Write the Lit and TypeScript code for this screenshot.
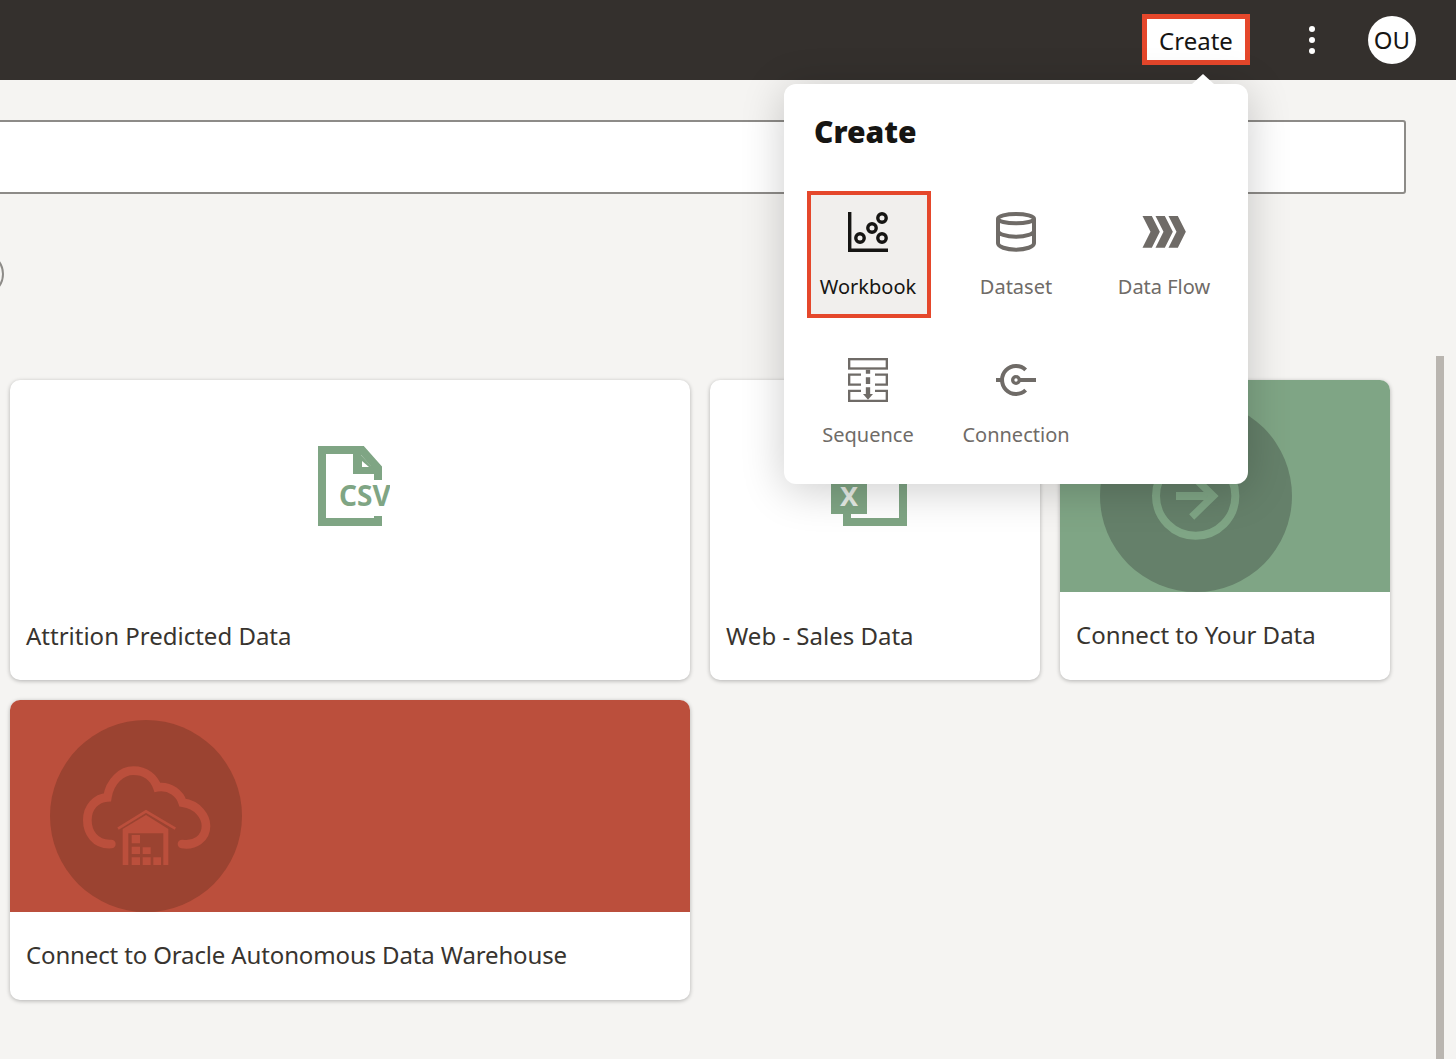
import { LitElement, css, html, svg } from "lit";
import { customElement } from "lit/decorators.js";

const CREATE_ITEMS = [
  {
    label: "Workbook",
    active: true,
    icon: html`<svg width="40" height="40" viewBox="0 0 40 40" fill="none" stroke="#161513">
      <path d="M1.7 0v38.3H40" stroke-width="3.4" />
      <circle cx="12" cy="26" r="4.2" stroke-width="3.4" />
      <circle cx="24" cy="16" r="4.2" stroke-width="3.4" />
      <circle cx="34" cy="6" r="4.2" stroke-width="3.4" />
      <circle cx="34" cy="26" r="4.2" stroke-width="3.4" />
    </svg>`,
  },
  {
    label: "Dataset",
    icon: html`<svg width="40" height="40" viewBox="618 96 120 120" fill="none" stroke="#6f6b67" stroke-width="12">
      <ellipse cx="678" cy="116" rx="54" ry="14" />
      <path d="M624 116v74c0 10 24 19 54 19s54-9 54-19v-74" />
      <path d="M624 152c0 10 24 18 54 18s54-8 54-18" />
    </svg>`,
  },
  {
    label: "Data Flow",
    icon: html`<svg width="44" height="32" viewBox="1057 110 131 96" fill="#6f6b67">
      <path d="M1058 110h28l24 47-24 48h-28l24-48z" />
      <path d="M1097 110h28l24 47-24 48h-28l24-48z" />
      <path d="M1136 110h28l24 47-24 48h-28l24-48z" />
    </svg>`,
  },
  {
    label: "Sequence",
    icon: html`<svg width="40" height="44" viewBox="174 57 120 132" fill="none" stroke="#6f6b67" stroke-width="7">
      <rect x="177.500" y="60.500" width="113" height="28" />
      <path d="M213 107h-35.500v30H213M255 107h35.500v30H255" />
      <path d="M213 155.500h-35.500v30h113v-30H255" />
      <path d="M234 92v12M234 115v20M234 145v24" stroke-width="13" />
      <path d="M219 165h30l-15 17z" fill="#6f6b67" stroke="none" />
    </svg>`,
  },
  {
    label: "Connection",
    icon: html`<svg width="40" height="32" viewBox="618 72 120 96" fill="none" stroke="#6f6b67">
      <path d="M707 89.500a42 42 0 1 0 0 61" stroke-width="12" />
      <circle cx="678" cy="120" r="10" stroke-width="10" />
      <path d="M690 120h48M618 120h18" stroke-width="12" />
    </svg>`,
  },
];

const csvIcon = svg`<svg width="80" height="80" viewBox="0 0 80 80" fill="none">
  <path d="M68 34V22L52 4H12v72h56v-6" stroke="#7fa584" stroke-width="8" />
  <path d="M47 4v20h21" stroke="#7fa584" stroke-width="8" />
  <path d="M45 8h5l14 15v5H45z" fill="#7fa584" />
  <path d="M52 15v6h7z" fill="#fff" />
  <rect x="24" y="38" width="56" height="30" fill="#fff" />
  <text x="29" y="60" class="csv">CSV</text>
</svg>`;

const excelIcon = svg`<svg width="88" height="80" viewBox="0 0 88 80" fill="none">
  <path d="M16 4h56v72H16V62" stroke="#7fa584" stroke-width="8" />
  <rect x="0" y="20" width="36" height="48" fill="#7fa584" />
  <text x="9" y="60" class="xls">X</text>
</svg>`;

const connectIcon = svg`<svg width="192" height="192" viewBox="150 90 576 576" fill="none" stroke="#7fa585">
  <circle cx="437" cy="378" r="119" stroke-width="24" />
  <path d="M378 378h112" stroke-width="24" />
  <path d="M425 315l65 63-65 63" stroke-width="22" />
</svg>`;

const warehouseIcon = svg`<svg width="192" height="192" viewBox="30 30 576 576" fill="none">
  <path d="M214 402c-50 3-72-36-72-72 0-38 26-66 60-68 8-50 44-80 78-80 38 0 62 22 72 50 40-6 68 20 76 46 46 6 70 42 70 70 0 38-34 60-72 54" stroke="#bb4f3c" stroke-width="26" stroke-linecap="round" />
  <path d="M234 356l84-52 88 52" stroke="#bb4f3c" stroke-width="8" />
  <path d="M248 357l70-42 67 42v108h-15v-95H265v95h-17z" fill="#bb4f3c" />
  <path d="M275 375h25v25h-25zM275 410h25v22h-25zM275 442h25v23h-25zM308 412h24v20h-24zM308 442h24v23h-24zM340 442h23v23h-23z" fill="#bb4f3c" />
</svg>`;

@customElement("app-root")
export class AppRoot extends LitElement {
  static styles = css`
    :host {
      display: block;
      position: relative;
      width: 1456px;
      height: 1059px;
      overflow: hidden;
      background: #f5f4f2;
      color: #38342f;
      font-family: "Noto Sans", "Open Sans", sans-serif;
    }

    .topbar {
      height: 80px;
      background: #34302d;
      display: flex;
      align-items: center;
      justify-content: flex-end;
      padding-right: 40px;
      box-sizing: border-box;
    }

    .create-btn {
      width: 108px;
      height: 51px;
      margin-top: -1px;
      padding-top: 2px;
      box-sizing: border-box;
      border: 5px solid #e5472b;
      background: #fff;
      color: #161513;
      font-size: 24px;
      display: flex;
      align-items: center;
      justify-content: center;
    }

    .dots {
      margin-left: 59px;
      display: flex;
      flex-direction: column;
      gap: 5px;
    }

    .dots span {
      width: 6px;
      height: 6px;
      border-radius: 50%;
      background: #fff;
    }

    .avatar {
      margin-left: 53px;
      width: 48px;
      height: 48px;
      padding-bottom: 2px;
      box-sizing: border-box;
      border-radius: 50%;
      background: #fff;
      color: #161513;
      font-size: 24px;
      display: flex;
      align-items: center;
      justify-content: center;
    }

    .search {
      margin: 40px 50px 0 -10px;
      height: 74px;
      box-sizing: border-box;
      background: #fff;
      border: 2px solid #8d8b88;
      border-radius: 3px;
    }

    .chip {
      margin: 58px 0 0 -40px;
      width: 44px;
      height: 44px;
      box-sizing: border-box;
      border: 2px solid #8d8b88;
      border-radius: 50%;
    }

    .tiles {
      margin-top: 84px;
      padding-left: 10px;
      display: grid;
      grid-template-columns: 680px 330px 330px;
      grid-auto-rows: 300px;
      gap: 20px;
    }

    .tile {
      background: #fff;
      border-radius: 10px;
      overflow: hidden;
      box-shadow: 0 1px 4px rgba(0, 0, 0, 0.28);
      display: flex;
      flex-direction: column;
    }

    .tile-art {
      height: 212px;
      flex: none;
      display: flex;
      align-items: center;
      justify-content: center;
    }

    .tile-art svg {
      display: block;
    }

    .tile-art.banner {
      justify-content: flex-start;
      padding-left: 40px;
      align-items: flex-end;
    }

    .tile-art.green {
      background: #7fa585;
    }

    .tile-art.red {
      background: #bb4f3c;
    }

    .disc {
      width: 192px;
      height: 192px;
      border-radius: 50%;
    }

    .green .disc {
      background: #65806a;
    }

    .red .disc {
      background: #9b4331;
    }

    .tile-label {
      flex: 1;
      display: flex;
      align-items: center;
      padding: 0 0 2px 16px;
      font-size: 24px;
    }

    .banner + .tile-label {
      padding-bottom: 4px;
    }

    .tile-label.tight {
      letter-spacing: -0.14px;
    }

    .csv {
      font: 700 28px "Noto Sans", sans-serif;
      fill: #7fa584;
    }

    .xls {
      font: 700 27px "Noto Sans", sans-serif;
      fill: #e6ece6;
    }

    .scrollbar {
      position: absolute;
      left: 1436px;
      top: 356px;
      bottom: 0;
      width: 8px;
      background: #b9b5b0;
    }

    .popover {
      position: absolute;
      left: 784px;
      top: 84px;
      width: 464px;
      height: 400px;
      box-sizing: border-box;
      padding: 28px 0 0 30px;
      background: #fff;
      border-radius: 12px;
      box-shadow: 0 6px 44px rgba(0, 0, 0, 0.2);
    }

    .popover::before {
      content: "";
      position: absolute;
      left: 408px;
      top: -10px;
      border-left: 11px solid transparent;
      border-right: 11px solid transparent;
      border-bottom: 10px solid #fff;
    }

    .popover h2 {
      margin: 0 0 39px;
      font-size: 30px;
      line-height: 40px;
      font-weight: 900;
      color: #161513;
    }

    .create-grid {
      margin-left: -7px;
      display: grid;
      grid-template-columns: repeat(3, 124px);
      grid-auto-rows: 127px;
      gap: 21px 24px;
    }

    .create-item {
      box-sizing: border-box;
      border: 4px solid transparent;
      padding-right: 2px;
      display: flex;
      flex-direction: column;
      align-items: center;
      color: #6f6b67;
      font-size: 20px;
    }

    .create-item.active {
      border-color: #e5472b;
      background: #f1efed;
      color: #161513;
    }

    .create-icon {
      height: 44px;
      margin-top: 15px;
      display: flex;
      align-items: center;
      justify-content: center;
    }

    .create-label {
      margin-top: 19px;
      line-height: 28px;
      white-space: nowrap;
    }
  `;

  render() {
    return html`
      <header class="topbar">
        <div class="create-btn">Create</div>
        <div class="dots"><span></span><span></span><span></span></div>
        <div class="avatar">OU</div>
      </header>

      <div class="search"></div>
      <div class="chip"></div>

      <section class="tiles">
        <div class="tile">
          <div class="tile-art">${csvIcon}</div>
          <div class="tile-label">Attrition Predicted Data</div>
        </div>
        <div class="tile">
          <div class="tile-art">${excelIcon}</div>
          <div class="tile-label">Web - Sales Data</div>
        </div>
        <div class="tile">
          <div class="tile-art banner green"><div class="disc">${connectIcon}</div></div>
          <div class="tile-label">Connect to Your Data</div>
        </div>
        <div class="tile">
          <div class="tile-art banner red"><div class="disc">${warehouseIcon}</div></div>
          <div class="tile-label tight">Connect to Oracle Autonomous Data Warehouse</div>
        </div>
      </section>

      <div class="scrollbar"></div>

      <div class="popover">
        <h2>Create</h2>
        <div class="create-grid">
          ${CREATE_ITEMS.map(
            (item) => html`
              <div class="create-item ${item.active ? "active" : ""}">
                <div class="create-icon">${item.icon}</div>
                <div class="create-label">${item.label}</div>
              </div>
            `
          )}
        </div>
      </div>
    `;
  }
}
